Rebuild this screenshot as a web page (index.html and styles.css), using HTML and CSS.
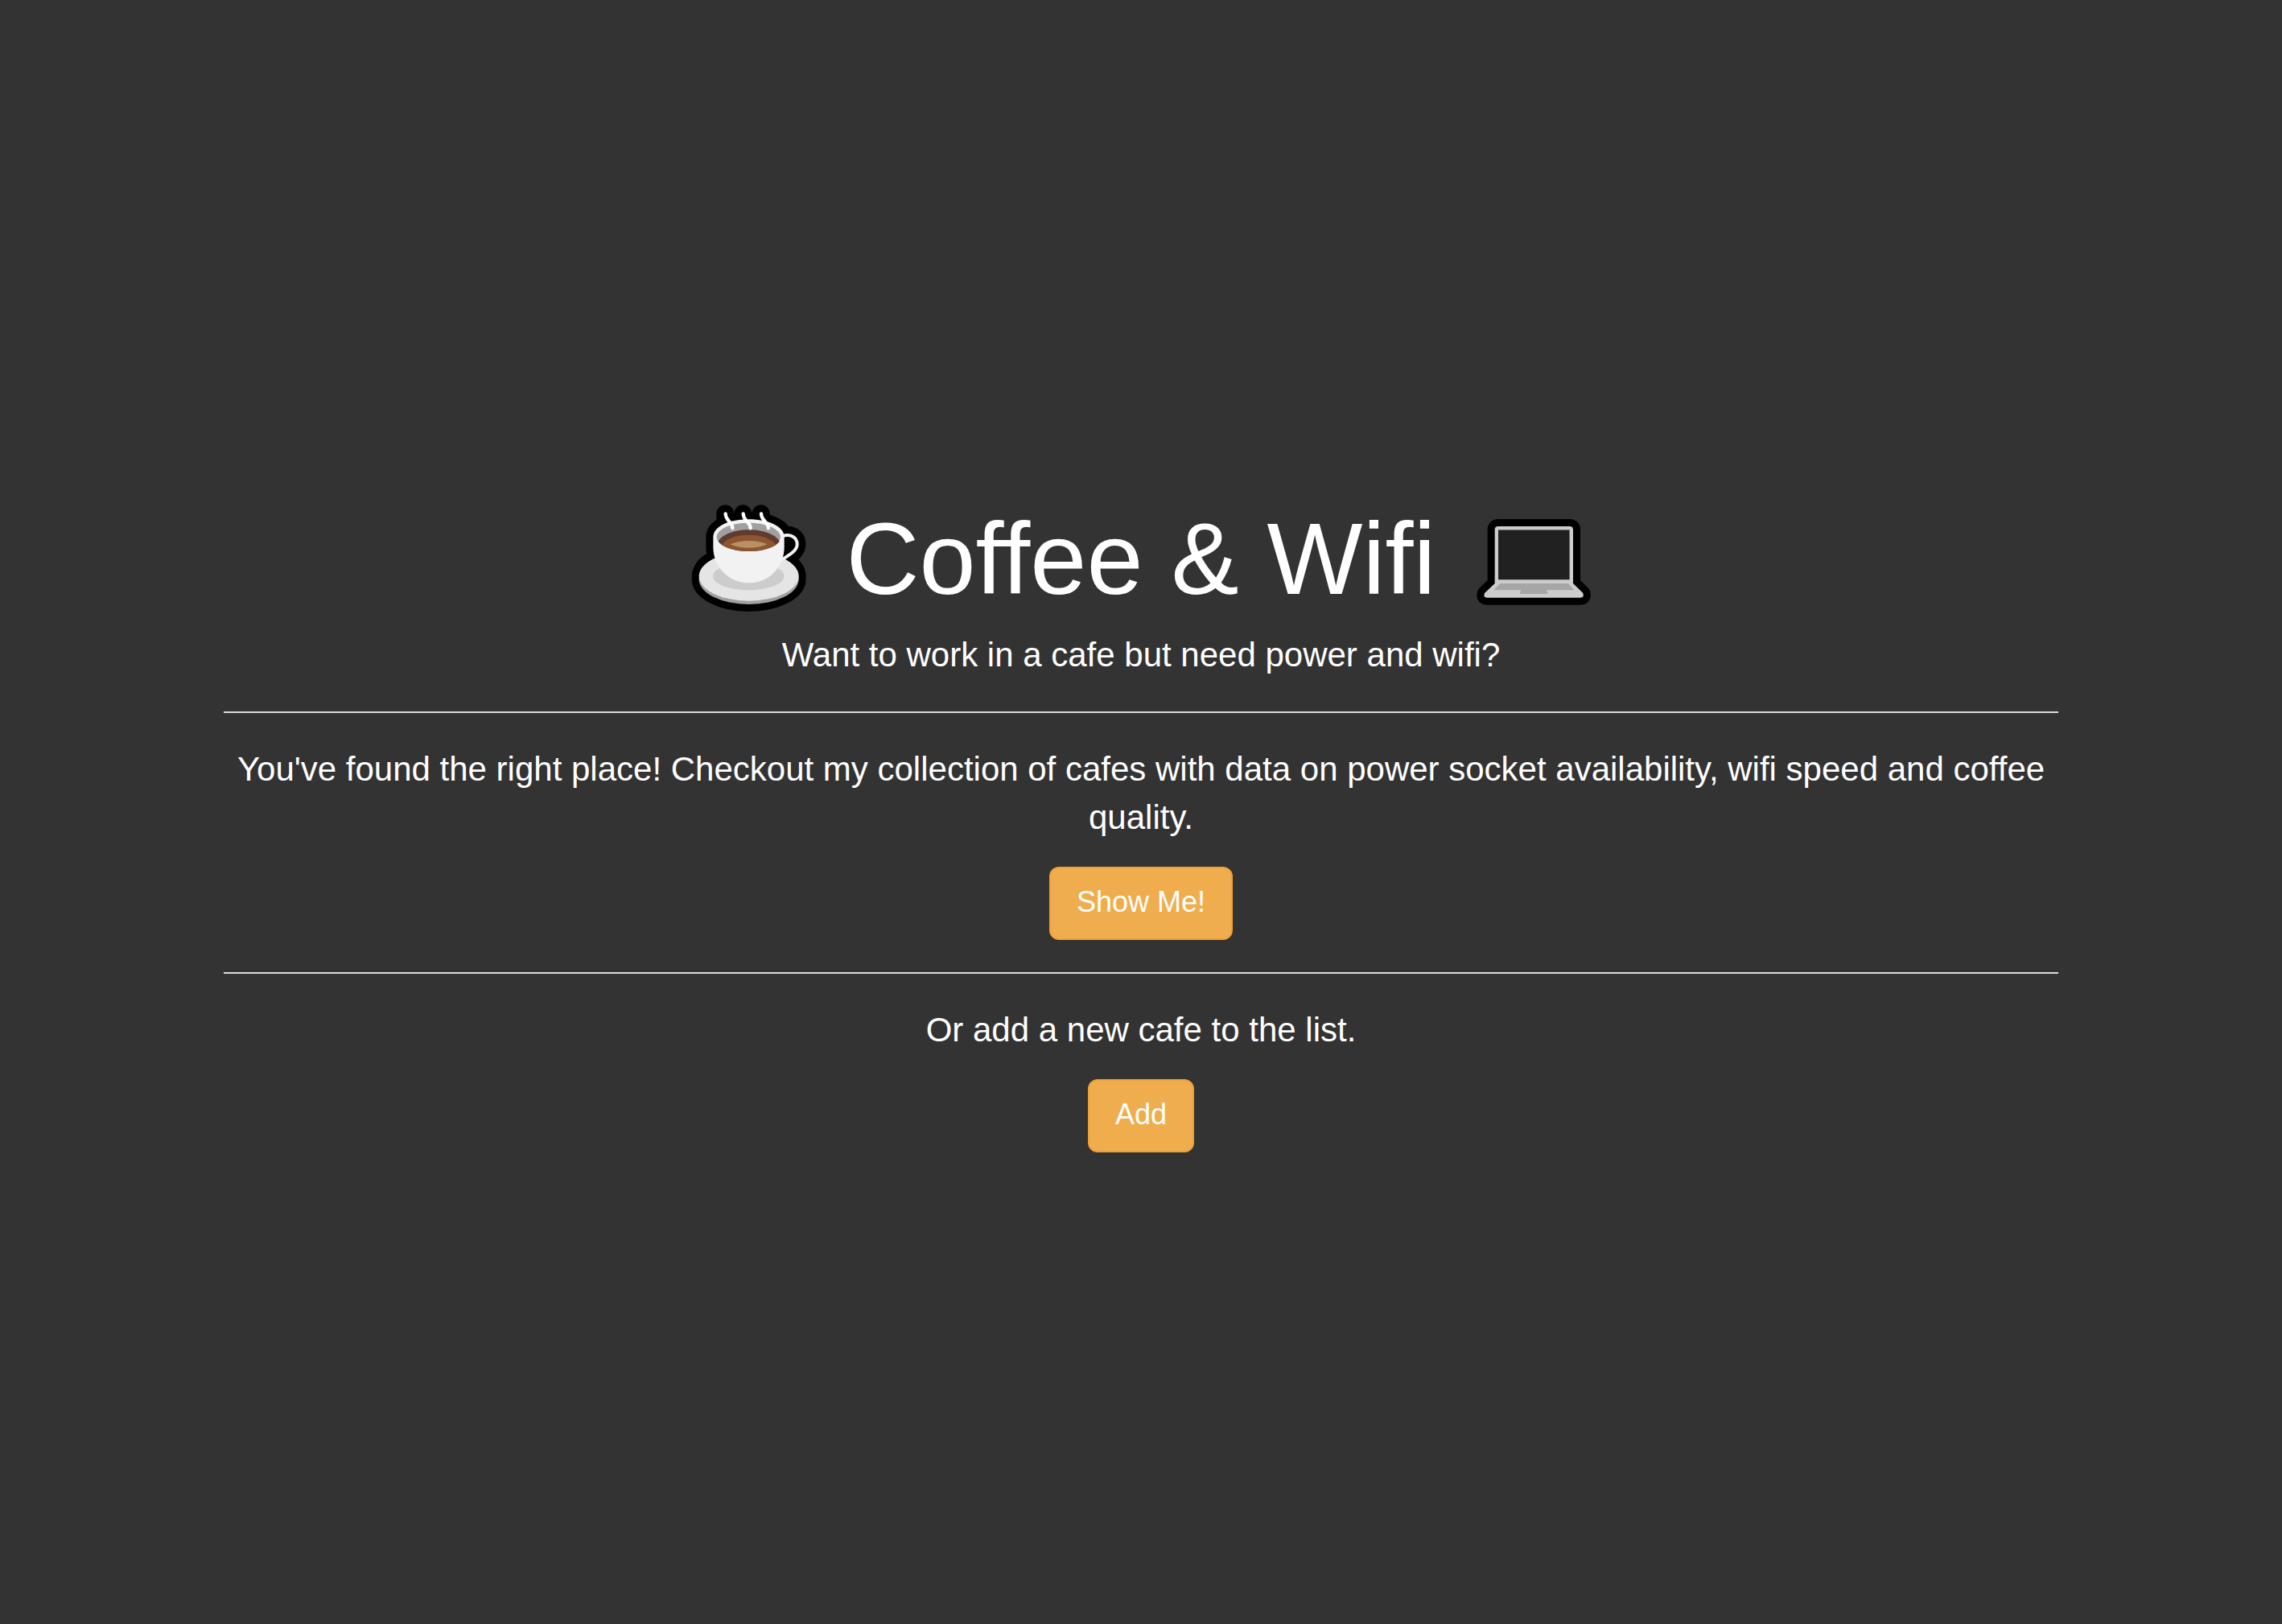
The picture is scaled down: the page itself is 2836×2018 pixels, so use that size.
FILE: index.html
```html
<!DOCTYPE html>
<html lang="en">
<head>
  <meta charset="utf-8">
  <title>Coffee &amp; Wifi</title>
  <link rel="stylesheet" href="styles.css">
</head>
<body>
  <main class="jumbotron">
    <div class="container">
      <h1 class="title">
        <svg class="emoji" viewBox="12 48 516 417" role="img" aria-label="Hot coffee">
          <g fill="#000" stroke="#000" stroke-width="54" stroke-linejoin="round" stroke-linecap="round">
            <path d="M139 175C139 137 195 109 271 109S402 137 402 165C425 155 457 168 457 202C457 225 440 240 413 258C440 275 458 298 458 323V330C458 383 375 426 272 426S86 383 86 330V323C86 292 110 265 148 252C140 240 139 225 139 210Z"/>
            <path fill="none" stroke-width="66" d="M184 88V110M250 88V110M317 88V110"/>
          </g>
          <ellipse cx="272" cy="332" rx="186" ry="94" fill="#a0a0a0"/>
          <ellipse cx="272" cy="321" rx="186" ry="92" fill="#e5e5e5"/>
          <ellipse cx="271" cy="321" rx="133" ry="52" fill="#ccc"/>
          <path d="M399 171C423 162 452 173 452 202C452 228 420 242 392 262" fill="none" stroke="#f2f2f2" stroke-width="12"/>
          <path d="M139 175C139 137 195 109 271 109S404 137 404 175V212C404 288 345 346 272 346S139 288 139 212Z" fill="#f2f2f2"/>
          <ellipse cx="271" cy="175" rx="119" ry="53" fill="#a0a0a0"/>
          <path d="M158 191C172 166 217 148 272 148S372 166 386 191C372 212 326 228 272 228S172 212 158 191Z" fill="#603c30"/>
          <path d="M172 205C185 181 226 167 272 167S359 181 372 205C350 220 313 228 272 228S194 220 172 205Z" fill="#8e562e"/>
          <path d="M202 202C242 185 301 185 341 202C301 220 242 220 202 202Z" fill="#b99065"/>
          <g fill="none" stroke="#fff" stroke-width="13" stroke-linecap="round">
            <path d="M185 88C185 115 211 118 211 142"/>
            <path d="M251 88C251 115 278 118 278 142"/>
            <path d="M318 88C318 115 345 118 345 142"/>
          </g>
        </svg>
        <span>Coffee &amp; Wifi</span>
        <svg class="emoji" viewBox="0 18 516 417" role="img" aria-label="Laptop">
          <path d="M126 105H392Q405 105 405 118V318L442 354Q448 371 432 371H85Q68 371 75 354L113 318V118Q113 105 126 105Z" fill="#000" stroke="#000" stroke-width="54" stroke-linejoin="round"/>
          <path d="M126 105H392Q405 105 405 118V318L442 354Q448 371 432 371H85Q68 371 75 354L113 318V118Q113 105 126 105Z" fill="#ccc"/>
          <path d="M126 118H392V304H126Z" fill="#212121"/>
          <path d="M126 118H392V304H390V120H126Z" fill="#777"/>
          <path d="M133 318H386L409 343H306L312 357H206L211 343H109Z" fill="#a6a6a6"/>
        </svg>
      </h1>
      <p class="lead">Want to work in a cafe but need power and wifi?</p>
      <hr class="rule">
      <p class="lead lead-action">You've found the right place! Checkout my collection of cafes with data on power socket availability, wifi speed and coffee quality.</p>
      <a class="btn" href="#cafes">Show Me!</a>
      <hr class="rule">
      <p class="lead lead-action">Or add a new cafe to the list.</p>
      <a class="btn" href="#add">Add</a>
    </div>
  </main>
</body>
</html>
```
FILE: styles.css
```css
* {
  box-sizing: border-box;
}

body {
  margin: 0;
  background: #333;
  color: #fff;
  font-family: "Liberation Sans", Arial, sans-serif;
}

.jumbotron {
  display: flex;
  align-items: center;
  justify-content: center;
  min-height: 100vh;
  padding: 39px 30px 0;
}

.container {
  display: flex;
  flex-direction: column;
  align-items: center;
  width: 100%;
  max-width: 2280px;
  text-align: center;
}

.title {
  display: flex;
  align-items: center;
  justify-content: center;
  gap: 36px;
  margin: 0 0 20px;
  font-size: 126px;
  font-weight: 400;
  line-height: 139px;
}

.emoji {
  flex: none;
  width: 172px;
  height: 139px;
}

.lead {
  margin: 0;
  font-size: 42px;
  line-height: 60px;
}

.lead-action {
  margin-bottom: 31px;
}

.rule {
  width: 100%;
  margin: 40px 0;
  border: 0;
  border-top: 2px solid #ddd;
}

.btn {
  padding: 18px 32px 22px;
  border: 2px solid #eea236;
  border-radius: 12px;
  background: #f0ad4e;
  color: #fff;
  font-size: 36px;
  line-height: 47px;
  text-decoration: none;
}
```
